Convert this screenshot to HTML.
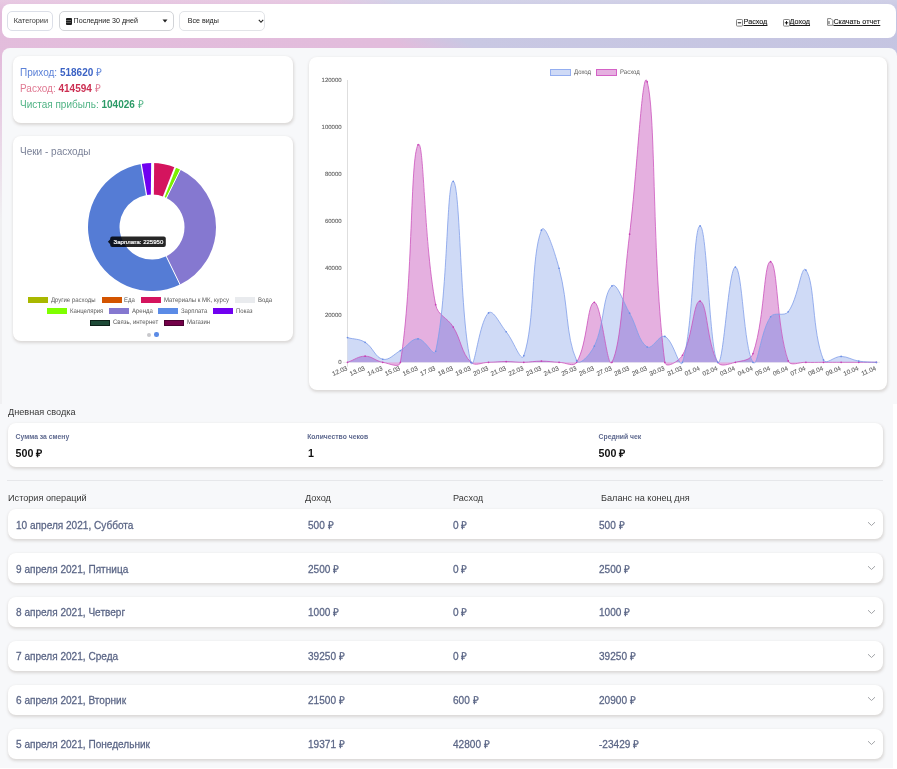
<!DOCTYPE html>
<html><head><meta charset="utf-8">
<style>
*{margin:0;padding:0;box-sizing:border-box}
html,body{width:897px;height:769px;overflow:hidden;background:#fff;font-family:"Liberation Sans",sans-serif}
.abs{position:absolute;left:0;top:0}
div{position:absolute}
#bgtop{left:0;top:0;width:897px;height:404px;background:linear-gradient(30deg,#e4bedc 0%,#e2bcdc 64%,#c9c8e3 68.5%,#c4c4e1 100%)}
#bgfade{left:0;top:0;width:897px;height:404px;background:linear-gradient(180deg,rgba(255,255,255,0.2) 0px,rgba(255,255,255,0) 14px),linear-gradient(180deg,rgba(240,240,242,0) 0px,rgba(240,240,242,0) 60px,rgba(240,240,242,1) 220px)}
#header{left:2px;top:3.5px;width:894px;height:34.5px;background:#fff;border-radius:8px}
.btn{background:#fff;border:0.6px solid #dcdfe8;border-radius:5px;height:19.5px;top:11px;font-size:7px;color:#333;line-height:18.5px}
#upper{left:2px;top:48px;width:895px;height:356px;background:#f7f8fa;border-radius:8px 8px 0 0}
#lower{left:0;top:404px;width:893px;height:364px;background:#f7f8fa}
.card{background:#fff;border-radius:8px;box-shadow:0.6px 1.5px 3px rgba(80,60,40,0.17)}
.lgb{width:20px;height:6px}
.lgt{text-rendering:geometricPrecision;font-size:6.6px;transform:scaleX(0.91);transform-origin:0 0;color:#595959;line-height:8px;white-space:nowrap}
.tk{text-rendering:geometricPrecision;font-size:6px;fill:#626262;stroke:#626262;stroke-width:0.1px;font-family:"Liberation Sans",sans-serif}
.xl{font-size:6.3px}
.yl{font-size:6px}
.link{font-size:7.2px;color:#1a1a1a;-webkit-text-stroke:0.12px #1a1a1a;text-decoration:underline;text-underline-offset:0.6px;top:17.2px;line-height:9px;white-space:nowrap}
.rt{font-size:11px;transform:scaleX(0.915);transform-origin:0 0;color:#5b6686;-webkit-text-stroke:0.28px #5b6686;line-height:12px;white-space:nowrap}
.row{left:8px;width:875px;height:30px}
.hd{font-size:9.9px;transform:scaleX(0.925);transform-origin:0 0;color:#363636;line-height:11px;white-space:nowrap}
.sl{font-size:6.8px;color:#5e698f;font-weight:bold;white-space:nowrap;line-height:8px}
.sv{font-size:10.7px;color:#111;font-weight:bold;white-space:nowrap;line-height:12px}
</style></head><body>
<div id="root" style="left:0;top:0;width:897px;height:769px;will-change:transform">
<div id="bgtop"></div>
<div id="bgfade"></div>
<div id="header">
</div>
<div class="btn" style="left:6.6px;width:46.7px;padding-left:6.2px;padding-top:0.4px;font-size:7.3px;color:#3a3a3a">Категории</div>
<div class="btn" style="left:59px;width:115.3px;border-color:#d2d4d8"></div>
<div style="left:65.9px;top:18px;width:5.7px;height:6.5px;background:#1e1e1e;border-radius:0.9px"></div><div style="left:66.4px;top:19.8px;width:4.7px;height:0.5px;background:#666"></div><div style="left:66.4px;top:21.9px;width:4.7px;height:0.4px;background:#555"></div>
<div style="left:73.6px;top:17px;font-size:7.1px;color:#222;line-height:9px;white-space:nowrap">Последние 30 дней</div>
<svg class="abs" style="left:162px;top:19px" width="6" height="4"><path d="M0.5 0.5 L5.5 0.5 L3 3.5Z" fill="#222"/></svg>
<div class="btn" style="left:179px;width:86.2px;border-color:#e2e4e8"></div>
<div style="left:187.7px;top:16.8px;font-size:7.1px;color:#222;line-height:9px;white-space:nowrap">Все виды</div>
<svg class="abs" style="left:257.5px;top:18.5px" width="6" height="5"><path d="M0.8 0.9 L3 3.3 L5.2 0.9" fill="none" stroke="#222" stroke-width="1.1"/></svg>

<div class="link" style="left:743.6px">Расход</div>
<svg class="abs" style="left:736.4px;top:18.6px" width="7" height="8" viewBox="0 0 7 8"><rect x="0.5" y="0.5" width="6" height="6.6" rx="0.8" fill="#fff" stroke="#777" stroke-width="0.9"/><path d="M1.8 3.8 H5.2" stroke="#111" stroke-width="1"/></svg>
<div class="link" style="left:789.6px">Доход</div>
<svg class="abs" style="left:783px;top:18.6px" width="7" height="8" viewBox="0 0 7 8"><rect x="0.5" y="0.5" width="6" height="6.6" rx="0.8" fill="#fff" stroke="#777" stroke-width="0.9"/><path d="M1.8 3.8 H5.2 M3.5 2.1 V5.5" stroke="#111" stroke-width="1"/></svg>
<div class="link" style="left:833.4px">Скачать отчет</div>
<svg class="abs" style="left:827.2px;top:18.4px" width="7" height="8" viewBox="0 0 7 8"><path d="M0.6 0.6 H4 L5.8 2.4 V7.3 H0.6 Z" fill="#fff" stroke="#777" stroke-width="0.9"/><path d="M2 3 V6" stroke="#222" stroke-width="0.8"/></svg>

<div id="upper"></div>
<div id="lower"></div>

<div class="card" style="left:12.5px;top:56.4px;width:280.5px;height:66.6px"></div>
<div style="left:20px;top:66px;font-size:11px;transform:scaleX(0.908);transform-origin:0 0;line-height:12px;white-space:nowrap;color:#5c82d8">Приход: <b style="color:#3b62c4">518620</b> ₽</div>
<div style="left:20px;top:82.1px;font-size:11px;transform:scaleX(0.908);transform-origin:0 0;line-height:12px;white-space:nowrap;color:#e07a93">Расход: <b style="color:#cc2f52">414594</b> ₽</div>
<div style="left:20px;top:98px;font-size:11px;transform:scaleX(0.908);transform-origin:0 0;line-height:12px;white-space:nowrap;color:#4fb384">Чистая прибыль: <b style="color:#2b9a66">104026</b> ₽</div>

<div class="card" style="left:12.5px;top:135.8px;width:280.5px;height:205px"></div>
<div style="left:20px;top:146px;font-size:10px;line-height:12px;white-space:nowrap;color:#7b8298">Чеки - расходы</div>
<svg class="abs" width="897" height="769">
<path d="M152.67 163.10 A64.00 64.00 0 0 1 175.14 167.43 L163.75 196.80 A32.50 32.50 0 0 0 152.34 194.60 Z" fill="#d4145e"/>
<path d="M175.14 167.43 A64.00 64.00 0 0 1 180.36 169.72 L166.40 197.96 A32.50 32.50 0 0 0 163.75 196.80 Z" fill="#7cf000"/>
<path d="M180.36 169.72 A64.00 64.00 0 0 1 180.06 284.62 L166.25 256.31 A32.50 32.50 0 0 0 166.40 197.96 Z" fill="#8578d0"/>
<path d="M180.06 284.62 A64.00 64.00 0 1 1 141.22 164.01 L146.52 195.06 A32.50 32.50 0 1 0 166.25 256.31 Z" fill="#557cd5"/>
<path d="M141.22 164.01 A64.00 64.00 0 0 1 152.67 163.10 L152.34 194.60 A32.50 32.50 0 0 0 146.52 195.06 Z" fill="#7000f0"/>
<line x1="146.86" y1="197.04" x2="140.88" y2="162.04" stroke="#fff" stroke-width="1.20"/>
<line x1="152.32" y1="196.60" x2="152.69" y2="161.10" stroke="#fff" stroke-width="3.00"/>
<line x1="163.03" y1="198.66" x2="175.87" y2="165.57" stroke="#fff" stroke-width="1.80"/>
<line x1="165.51" y1="199.76" x2="181.24" y2="167.93" stroke="#fff" stroke-width="1.00"/>
<line x1="165.37" y1="254.51" x2="180.93" y2="286.42" stroke="#fff" stroke-width="1.00"/>
<path d="M107.9 241.7 L110.5 239 L110.5 244.4Z" fill="rgba(0,0,0,0.85)"/>
<rect x="110.2" y="236.5" width="55.6" height="10.4" rx="2" fill="rgba(0,0,0,0.85)"/>
<text x="113.6" y="243.9" font-size="6" fill="#fff" stroke="#fff" stroke-width="0.2" font-family="Liberation Sans">Зарплата: 225950</text>
</svg>
<div class="lgb" style="left:28.1px;top:297.0px;background:#a9b800;"></div>
<div class="lgt" style="left:51.0px;top:296.9px">Другие расходы</div>
<div class="lgb" style="left:101.7px;top:297.0px;background:#d35400;"></div>
<div class="lgt" style="left:124.3px;top:296.9px">Еда</div>
<div class="lgb" style="left:140.6px;top:297.0px;background:#d4145e;"></div>
<div class="lgt" style="left:164.0px;top:296.9px">Материалы к МК, курсу</div>
<div class="lgb" style="left:234.5px;top:297.0px;background:#e9ebee;"></div>
<div class="lgt" style="left:257.7px;top:296.9px">Вода</div>
<div class="lgb" style="left:47.0px;top:308.0px;background:#7fff00;"></div>
<div class="lgt" style="left:69.9px;top:307.9px">Канцелярия</div>
<div class="lgb" style="left:109.0px;top:308.0px;background:#8578d0;"></div>
<div class="lgt" style="left:132.2px;top:307.9px">Аренда</div>
<div class="lgb" style="left:158.3px;top:308.0px;background:#5b8be6;"></div>
<div class="lgt" style="left:181.4px;top:307.9px">Зарплата</div>
<div class="lgb" style="left:213.0px;top:308.0px;background:#7000f0;"></div>
<div class="lgt" style="left:236.2px;top:307.9px">Показ</div>
<div class="lgb" style="left:89.9px;top:319.5px;background:#1d4a37;border:0.5px solid #0c2018;"></div>
<div class="lgt" style="left:113.0px;top:319.4px">Связь, интернет</div>
<div class="lgb" style="left:164.0px;top:319.5px;background:#730048;border:0.5px solid #4a0030;"></div>
<div class="lgt" style="left:187.0px;top:319.4px">Магазин</div>
<div style="left:146.6px;top:332.6px;width:4px;height:4px;border-radius:50%;background:#c8c8cc"></div>
<div style="left:154.3px;top:332px;width:4.5px;height:4.5px;border-radius:50%;background:#5b8be6"></div>

<div class="card" style="left:309px;top:56.5px;width:577.7px;height:333px"></div>
<div style="left:550.4px;top:68.7px;width:20.6px;height:7px;background:#cfdaf6;border:0.6px solid #94aef0"></div>
<div class="lgt" style="left:573.7px;top:69px">Доход</div>
<div style="left:595.9px;top:68.7px;width:21px;height:7px;background:#e5b0e0;border:0.6px solid #d462c6"></div>
<div class="lgt" style="left:619.9px;top:69px">Расход</div>
<svg class="abs" width="897" height="769" viewBox="0 0 897 769">
<line x1="347.5" y1="80" x2="347.5" y2="366.8" stroke="#d5d5d5" stroke-width="0.8"/>
<line x1="343" y1="362.3" x2="880" y2="362.3" stroke="#e0e0e0" stroke-width="0.6"/>
<defs><clipPath id="cpe"><path d="M347.50 362.30 C354.55 359.86 358.08 356.19 365.13 356.19 C372.18 356.19 375.51 361.04 382.76 362.30 C389.61 363.49 399.34 368.80 400.39 362.30 C413.44 281.82 409.90 158.11 418.02 144.85 C424.01 135.07 423.67 242.78 435.65 304.70 C437.77 315.66 447.37 317.38 453.28 327.04 C461.47 340.42 461.16 352.55 470.91 362.30 C475.27 366.66 481.49 362.44 488.54 362.30 C495.59 362.16 499.12 361.59 506.17 361.59 C513.22 361.59 516.75 362.39 523.80 362.30 C530.86 362.21 534.38 361.12 541.43 361.12 C548.48 361.12 552.00 362.06 559.06 362.30 C566.10 362.53 573.59 367.58 576.69 362.30 C587.69 343.60 587.27 302.35 594.32 302.35 C601.37 302.35 607.36 371.18 611.95 362.30 C621.46 343.91 623.13 285.50 629.58 234.18 C637.23 173.32 642.23 63.75 647.21 81.85 C656.33 115.00 651.63 259.86 664.84 362.30 C665.73 369.22 678.94 361.37 682.47 355.25 C693.04 336.92 693.44 299.85 700.10 301.18 C707.55 302.67 706.69 343.16 717.73 362.30 C720.79 367.61 728.69 363.94 735.36 362.30 C742.80 360.47 750.54 360.59 752.99 353.60 C764.65 320.34 763.83 260.28 770.62 261.68 C777.93 263.20 776.25 326.65 788.25 360.89 C790.36 366.90 798.82 362.02 805.88 362.30 C812.92 362.58 816.46 362.30 823.51 362.30 C830.56 362.30 834.09 362.30 841.14 362.30 C848.19 362.30 851.72 362.30 858.77 362.30 C865.82 362.30 869.35 362.30 876.40 362.30 L876.40 362.30 L347.50 362.30 Z"/></clipPath></defs>
<path d="M347.50 362.30 C354.55 359.86 358.08 356.19 365.13 356.19 C372.18 356.19 375.51 361.04 382.76 362.30 C389.61 363.49 399.34 368.80 400.39 362.30 C413.44 281.82 409.90 158.11 418.02 144.85 C424.01 135.07 423.67 242.78 435.65 304.70 C437.77 315.66 447.37 317.38 453.28 327.04 C461.47 340.42 461.16 352.55 470.91 362.30 C475.27 366.66 481.49 362.44 488.54 362.30 C495.59 362.16 499.12 361.59 506.17 361.59 C513.22 361.59 516.75 362.39 523.80 362.30 C530.86 362.21 534.38 361.12 541.43 361.12 C548.48 361.12 552.00 362.06 559.06 362.30 C566.10 362.53 573.59 367.58 576.69 362.30 C587.69 343.60 587.27 302.35 594.32 302.35 C601.37 302.35 607.36 371.18 611.95 362.30 C621.46 343.91 623.13 285.50 629.58 234.18 C637.23 173.32 642.23 63.75 647.21 81.85 C656.33 115.00 651.63 259.86 664.84 362.30 C665.73 369.22 678.94 361.37 682.47 355.25 C693.04 336.92 693.44 299.85 700.10 301.18 C707.55 302.67 706.69 343.16 717.73 362.30 C720.79 367.61 728.69 363.94 735.36 362.30 C742.80 360.47 750.54 360.59 752.99 353.60 C764.65 320.34 763.83 260.28 770.62 261.68 C777.93 263.20 776.25 326.65 788.25 360.89 C790.36 366.90 798.82 362.02 805.88 362.30 C812.92 362.58 816.46 362.30 823.51 362.30 C830.56 362.30 834.09 362.30 841.14 362.30 C848.19 362.30 851.72 362.30 858.77 362.30 C865.82 362.30 869.35 362.30 876.40 362.30 L876.40 362.30 L347.50 362.30 Z" fill="#e5b0e0"/>
<path d="M347.50 337.62 C354.55 339.50 359.10 338.62 365.13 342.32 C373.21 347.27 374.94 357.42 382.76 359.24 C389.05 360.71 393.60 354.48 400.39 350.55 C407.71 346.30 411.03 338.65 418.02 338.79 C425.14 338.93 434.07 358.32 435.65 351.25 C448.17 295.32 446.45 179.14 453.28 181.29 C460.55 183.56 459.96 321.42 470.91 362.30 C474.07 374.08 479.09 321.13 488.54 312.93 C493.19 308.90 499.62 323.80 506.17 331.74 C513.73 340.91 521.12 363.44 523.80 355.72 C535.22 322.82 530.83 256.46 541.43 230.18 C544.94 221.48 554.71 252.17 559.06 268.27 C568.81 304.35 565.35 335.62 576.69 360.65 C579.45 366.74 590.55 354.07 594.32 346.08 C604.65 324.17 602.66 294.57 611.95 285.90 C616.76 281.41 623.10 301.93 629.58 313.17 C637.20 326.38 638.04 340.97 647.21 347.02 C652.15 350.28 659.25 334.02 664.84 336.44 C673.35 340.13 679.85 370.50 682.47 362.30 C693.96 326.30 693.05 225.95 700.10 225.95 C707.15 225.95 709.45 352.64 717.73 362.30 C723.56 369.10 728.31 267.09 735.36 267.09 C742.41 267.09 743.61 349.09 752.99 362.30 C757.72 368.96 760.36 331.46 770.62 316.76 C774.47 311.24 784.19 317.14 788.25 311.76 C798.29 298.45 801.21 263.65 805.88 270.03 C815.32 282.93 811.72 331.06 823.51 359.95 C825.82 365.62 834.14 356.19 841.14 356.42 C848.24 356.66 851.60 359.93 858.77 361.12 C865.71 362.28 869.35 361.83 876.40 362.30 L876.40 362.30 L347.50 362.30 Z" fill="#cfdaf6"/>
<path d="M347.50 337.62 C354.55 339.50 359.10 338.62 365.13 342.32 C373.21 347.27 374.94 357.42 382.76 359.24 C389.05 360.71 393.60 354.48 400.39 350.55 C407.71 346.30 411.03 338.65 418.02 338.79 C425.14 338.93 434.07 358.32 435.65 351.25 C448.17 295.32 446.45 179.14 453.28 181.29 C460.55 183.56 459.96 321.42 470.91 362.30 C474.07 374.08 479.09 321.13 488.54 312.93 C493.19 308.90 499.62 323.80 506.17 331.74 C513.73 340.91 521.12 363.44 523.80 355.72 C535.22 322.82 530.83 256.46 541.43 230.18 C544.94 221.48 554.71 252.17 559.06 268.27 C568.81 304.35 565.35 335.62 576.69 360.65 C579.45 366.74 590.55 354.07 594.32 346.08 C604.65 324.17 602.66 294.57 611.95 285.90 C616.76 281.41 623.10 301.93 629.58 313.17 C637.20 326.38 638.04 340.97 647.21 347.02 C652.15 350.28 659.25 334.02 664.84 336.44 C673.35 340.13 679.85 370.50 682.47 362.30 C693.96 326.30 693.05 225.95 700.10 225.95 C707.15 225.95 709.45 352.64 717.73 362.30 C723.56 369.10 728.31 267.09 735.36 267.09 C742.41 267.09 743.61 349.09 752.99 362.30 C757.72 368.96 760.36 331.46 770.62 316.76 C774.47 311.24 784.19 317.14 788.25 311.76 C798.29 298.45 801.21 263.65 805.88 270.03 C815.32 282.93 811.72 331.06 823.51 359.95 C825.82 365.62 834.14 356.19 841.14 356.42 C848.24 356.66 851.60 359.93 858.77 361.12 C865.71 362.28 869.35 361.83 876.40 362.30 L876.40 362.30 L347.50 362.30 Z" fill="#b2a0e2" clip-path="url(#cpe)"/>
<path d="M347.50 362.30 C354.55 359.86 358.08 356.19 365.13 356.19 C372.18 356.19 375.51 361.04 382.76 362.30 C389.61 363.49 399.34 368.80 400.39 362.30 C413.44 281.82 409.90 158.11 418.02 144.85 C424.01 135.07 423.67 242.78 435.65 304.70 C437.77 315.66 447.37 317.38 453.28 327.04 C461.47 340.42 461.16 352.55 470.91 362.30 C475.27 366.66 481.49 362.44 488.54 362.30 C495.59 362.16 499.12 361.59 506.17 361.59 C513.22 361.59 516.75 362.39 523.80 362.30 C530.86 362.21 534.38 361.12 541.43 361.12 C548.48 361.12 552.00 362.06 559.06 362.30 C566.10 362.53 573.59 367.58 576.69 362.30 C587.69 343.60 587.27 302.35 594.32 302.35 C601.37 302.35 607.36 371.18 611.95 362.30 C621.46 343.91 623.13 285.50 629.58 234.18 C637.23 173.32 642.23 63.75 647.21 81.85 C656.33 115.00 651.63 259.86 664.84 362.30 C665.73 369.22 678.94 361.37 682.47 355.25 C693.04 336.92 693.44 299.85 700.10 301.18 C707.55 302.67 706.69 343.16 717.73 362.30 C720.79 367.61 728.69 363.94 735.36 362.30 C742.80 360.47 750.54 360.59 752.99 353.60 C764.65 320.34 763.83 260.28 770.62 261.68 C777.93 263.20 776.25 326.65 788.25 360.89 C790.36 366.90 798.82 362.02 805.88 362.30 C812.92 362.58 816.46 362.30 823.51 362.30 C830.56 362.30 834.09 362.30 841.14 362.30 C848.19 362.30 851.72 362.30 858.77 362.30 C865.82 362.30 869.35 362.30 876.40 362.30" fill="none" stroke="#c94cba" stroke-width="0.75"/>
<circle cx="347.50" cy="362.30" r="0.85" fill="#c63fb4"/>
<circle cx="365.13" cy="356.19" r="0.85" fill="#c63fb4"/>
<circle cx="382.76" cy="362.30" r="0.85" fill="#c63fb4"/>
<circle cx="400.39" cy="362.30" r="0.85" fill="#c63fb4"/>
<circle cx="418.02" cy="144.85" r="0.85" fill="#c63fb4"/>
<circle cx="435.65" cy="304.70" r="0.85" fill="#c63fb4"/>
<circle cx="453.28" cy="327.04" r="0.85" fill="#c63fb4"/>
<circle cx="470.91" cy="362.30" r="0.85" fill="#c63fb4"/>
<circle cx="488.54" cy="362.30" r="0.85" fill="#c63fb4"/>
<circle cx="506.17" cy="361.59" r="0.85" fill="#c63fb4"/>
<circle cx="523.80" cy="362.30" r="0.85" fill="#c63fb4"/>
<circle cx="541.43" cy="361.12" r="0.85" fill="#c63fb4"/>
<circle cx="559.06" cy="362.30" r="0.85" fill="#c63fb4"/>
<circle cx="576.69" cy="362.30" r="0.85" fill="#c63fb4"/>
<circle cx="594.32" cy="302.35" r="0.85" fill="#c63fb4"/>
<circle cx="611.95" cy="362.30" r="0.85" fill="#c63fb4"/>
<circle cx="629.58" cy="234.18" r="0.85" fill="#c63fb4"/>
<circle cx="647.21" cy="81.85" r="0.85" fill="#c63fb4"/>
<circle cx="664.84" cy="362.30" r="0.85" fill="#c63fb4"/>
<circle cx="682.47" cy="355.25" r="0.85" fill="#c63fb4"/>
<circle cx="700.10" cy="301.18" r="0.85" fill="#c63fb4"/>
<circle cx="717.73" cy="362.30" r="0.85" fill="#c63fb4"/>
<circle cx="735.36" cy="362.30" r="0.85" fill="#c63fb4"/>
<circle cx="752.99" cy="353.60" r="0.85" fill="#c63fb4"/>
<circle cx="770.62" cy="261.68" r="0.85" fill="#c63fb4"/>
<circle cx="788.25" cy="360.89" r="0.85" fill="#c63fb4"/>
<circle cx="805.88" cy="362.30" r="0.85" fill="#c63fb4"/>
<circle cx="823.51" cy="362.30" r="0.85" fill="#c63fb4"/>
<circle cx="841.14" cy="362.30" r="0.85" fill="#c63fb4"/>
<circle cx="858.77" cy="362.30" r="0.85" fill="#c63fb4"/>
<circle cx="876.40" cy="362.30" r="0.85" fill="#c63fb4"/>
<path d="M347.50 337.62 C354.55 339.50 359.10 338.62 365.13 342.32 C373.21 347.27 374.94 357.42 382.76 359.24 C389.05 360.71 393.60 354.48 400.39 350.55 C407.71 346.30 411.03 338.65 418.02 338.79 C425.14 338.93 434.07 358.32 435.65 351.25 C448.17 295.32 446.45 179.14 453.28 181.29 C460.55 183.56 459.96 321.42 470.91 362.30 C474.07 374.08 479.09 321.13 488.54 312.93 C493.19 308.90 499.62 323.80 506.17 331.74 C513.73 340.91 521.12 363.44 523.80 355.72 C535.22 322.82 530.83 256.46 541.43 230.18 C544.94 221.48 554.71 252.17 559.06 268.27 C568.81 304.35 565.35 335.62 576.69 360.65 C579.45 366.74 590.55 354.07 594.32 346.08 C604.65 324.17 602.66 294.57 611.95 285.90 C616.76 281.41 623.10 301.93 629.58 313.17 C637.20 326.38 638.04 340.97 647.21 347.02 C652.15 350.28 659.25 334.02 664.84 336.44 C673.35 340.13 679.85 370.50 682.47 362.30 C693.96 326.30 693.05 225.95 700.10 225.95 C707.15 225.95 709.45 352.64 717.73 362.30 C723.56 369.10 728.31 267.09 735.36 267.09 C742.41 267.09 743.61 349.09 752.99 362.30 C757.72 368.96 760.36 331.46 770.62 316.76 C774.47 311.24 784.19 317.14 788.25 311.76 C798.29 298.45 801.21 263.65 805.88 270.03 C815.32 282.93 811.72 331.06 823.51 359.95 C825.82 365.62 834.14 356.19 841.14 356.42 C848.24 356.66 851.60 359.93 858.77 361.12 C865.71 362.28 869.35 361.83 876.40 362.30" fill="none" stroke="#7b9ae8" stroke-width="0.75"/>
<circle cx="347.50" cy="337.62" r="0.85" fill="#6c8fe6"/>
<circle cx="365.13" cy="342.32" r="0.85" fill="#6c8fe6"/>
<circle cx="382.76" cy="359.24" r="0.85" fill="#6c8fe6"/>
<circle cx="400.39" cy="350.55" r="0.85" fill="#6c8fe6"/>
<circle cx="418.02" cy="338.79" r="0.85" fill="#6c8fe6"/>
<circle cx="435.65" cy="351.25" r="0.85" fill="#6c8fe6"/>
<circle cx="453.28" cy="181.29" r="0.85" fill="#6c8fe6"/>
<circle cx="470.91" cy="362.30" r="0.85" fill="#6c8fe6"/>
<circle cx="488.54" cy="312.93" r="0.85" fill="#6c8fe6"/>
<circle cx="506.17" cy="331.74" r="0.85" fill="#6c8fe6"/>
<circle cx="523.80" cy="355.72" r="0.85" fill="#6c8fe6"/>
<circle cx="541.43" cy="230.18" r="0.85" fill="#6c8fe6"/>
<circle cx="559.06" cy="268.27" r="0.85" fill="#6c8fe6"/>
<circle cx="576.69" cy="360.65" r="0.85" fill="#6c8fe6"/>
<circle cx="594.32" cy="346.08" r="0.85" fill="#6c8fe6"/>
<circle cx="611.95" cy="285.90" r="0.85" fill="#6c8fe6"/>
<circle cx="629.58" cy="313.17" r="0.85" fill="#6c8fe6"/>
<circle cx="647.21" cy="347.02" r="0.85" fill="#6c8fe6"/>
<circle cx="664.84" cy="336.44" r="0.85" fill="#6c8fe6"/>
<circle cx="682.47" cy="362.30" r="0.85" fill="#6c8fe6"/>
<circle cx="700.10" cy="225.95" r="0.85" fill="#6c8fe6"/>
<circle cx="717.73" cy="362.30" r="0.85" fill="#6c8fe6"/>
<circle cx="735.36" cy="267.09" r="0.85" fill="#6c8fe6"/>
<circle cx="752.99" cy="362.30" r="0.85" fill="#6c8fe6"/>
<circle cx="770.62" cy="316.76" r="0.85" fill="#6c8fe6"/>
<circle cx="788.25" cy="311.76" r="0.85" fill="#6c8fe6"/>
<circle cx="805.88" cy="270.03" r="0.85" fill="#6c8fe6"/>
<circle cx="823.51" cy="359.95" r="0.85" fill="#6c8fe6"/>
<circle cx="841.14" cy="356.42" r="0.85" fill="#6c8fe6"/>
<circle cx="858.77" cy="361.12" r="0.85" fill="#6c8fe6"/>
<circle cx="876.40" cy="362.30" r="0.85" fill="#6c8fe6"/>
<text transform="translate(341.6 82.30)" text-anchor="end" class="tk yl">120000</text>
<text transform="translate(341.6 129.32)" text-anchor="end" class="tk yl">100000</text>
<text transform="translate(341.6 176.33)" text-anchor="end" class="tk yl">80000</text>
<text transform="translate(341.6 223.35)" text-anchor="end" class="tk yl">60000</text>
<text transform="translate(341.6 270.37)" text-anchor="end" class="tk yl">40000</text>
<text transform="translate(341.6 317.38)" text-anchor="end" class="tk yl">20000</text>
<text transform="translate(341.6 364.40)" text-anchor="end" class="tk yl">0</text>
<text transform="translate(347.70 369.80) rotate(-23)" text-anchor="end" class="tk xl">12.03</text>
<text transform="translate(365.33 369.80) rotate(-23)" text-anchor="end" class="tk xl">13.03</text>
<text transform="translate(382.96 369.80) rotate(-23)" text-anchor="end" class="tk xl">14.03</text>
<text transform="translate(400.59 369.80) rotate(-23)" text-anchor="end" class="tk xl">15.03</text>
<text transform="translate(418.22 369.80) rotate(-23)" text-anchor="end" class="tk xl">16.03</text>
<text transform="translate(435.85 369.80) rotate(-23)" text-anchor="end" class="tk xl">17.03</text>
<text transform="translate(453.48 369.80) rotate(-23)" text-anchor="end" class="tk xl">18.03</text>
<text transform="translate(471.11 369.80) rotate(-23)" text-anchor="end" class="tk xl">19.03</text>
<text transform="translate(488.74 369.80) rotate(-23)" text-anchor="end" class="tk xl">20.03</text>
<text transform="translate(506.37 369.80) rotate(-23)" text-anchor="end" class="tk xl">21.03</text>
<text transform="translate(524.00 369.80) rotate(-23)" text-anchor="end" class="tk xl">22.03</text>
<text transform="translate(541.63 369.80) rotate(-23)" text-anchor="end" class="tk xl">23.03</text>
<text transform="translate(559.26 369.80) rotate(-23)" text-anchor="end" class="tk xl">24.03</text>
<text transform="translate(576.89 369.80) rotate(-23)" text-anchor="end" class="tk xl">25.03</text>
<text transform="translate(594.52 369.80) rotate(-23)" text-anchor="end" class="tk xl">26.03</text>
<text transform="translate(612.15 369.80) rotate(-23)" text-anchor="end" class="tk xl">27.03</text>
<text transform="translate(629.78 369.80) rotate(-23)" text-anchor="end" class="tk xl">28.03</text>
<text transform="translate(647.41 369.80) rotate(-23)" text-anchor="end" class="tk xl">29.03</text>
<text transform="translate(665.04 369.80) rotate(-23)" text-anchor="end" class="tk xl">30.03</text>
<text transform="translate(682.67 369.80) rotate(-23)" text-anchor="end" class="tk xl">31.03</text>
<text transform="translate(700.30 369.80) rotate(-23)" text-anchor="end" class="tk xl">01.04</text>
<text transform="translate(717.93 369.80) rotate(-23)" text-anchor="end" class="tk xl">02.04</text>
<text transform="translate(735.56 369.80) rotate(-23)" text-anchor="end" class="tk xl">03.04</text>
<text transform="translate(753.19 369.80) rotate(-23)" text-anchor="end" class="tk xl">04.04</text>
<text transform="translate(770.82 369.80) rotate(-23)" text-anchor="end" class="tk xl">05.04</text>
<text transform="translate(788.45 369.80) rotate(-23)" text-anchor="end" class="tk xl">06.04</text>
<text transform="translate(806.08 369.80) rotate(-23)" text-anchor="end" class="tk xl">07.04</text>
<text transform="translate(823.71 369.80) rotate(-23)" text-anchor="end" class="tk xl">08.04</text>
<text transform="translate(841.34 369.80) rotate(-23)" text-anchor="end" class="tk xl">09.04</text>
<text transform="translate(858.97 369.80) rotate(-23)" text-anchor="end" class="tk xl">10.04</text>
<text transform="translate(876.60 369.80) rotate(-23)" text-anchor="end" class="tk xl">11.04</text>
</svg>

<div class="hd" style="left:7.8px;top:405.8px">Дневная сводка</div>
<div class="card" style="left:8px;top:423px;width:875px;height:44px"></div>
<div class="sl" style="left:15.6px;top:433px">Сумма за смену</div>
<div class="sv" style="left:15.6px;top:447.2px">500 ₽</div>
<div class="sl" style="left:307.2px;top:433px">Количество чеков</div>
<div class="sv" style="left:308px;top:447.2px">1</div>
<div class="sl" style="left:598.6px;top:433px">Средний чек</div>
<div class="sv" style="left:598.6px;top:447.2px">500 ₽</div>
<div style="left:7px;top:480px;width:876px;height:0.6px;background:#e6e7ea"></div>

<div class="hd" style="left:7.8px;top:492.2px">История операций</div>
<div class="hd" style="left:304.8px;top:492.2px">Доход</div>
<div class="hd" style="left:453.1px;top:492.2px">Расход</div>
<div class="hd" style="left:601.4px;top:492.2px">Баланс на конец дня</div>
<div class="card row" style="top:509.0px"></div>
<div class="rt" style="left:16.0px;top:518.6px">10 апреля 2021, Суббота</div>
<div class="rt" style="left:307.5px;top:518.6px">500 ₽</div>
<div class="rt" style="left:453.1px;top:518.6px">0 ₽</div>
<div class="rt" style="left:598.6px;top:518.6px">500 ₽</div>
<svg class="abs" style="left:867px;top:520.8px" width="9" height="6" viewBox="0 0 9 6"><path d="M1 1.2 L4.5 4.5 L8 1.2" fill="none" stroke="#a2a4a8" stroke-width="1"/></svg>
<div class="card row" style="top:552.9px"></div>
<div class="rt" style="left:16.0px;top:562.5px">9 апреля 2021, Пятница</div>
<div class="rt" style="left:307.5px;top:562.5px">2500 ₽</div>
<div class="rt" style="left:453.1px;top:562.5px">0 ₽</div>
<div class="rt" style="left:598.6px;top:562.5px">2500 ₽</div>
<svg class="abs" style="left:867px;top:564.7px" width="9" height="6" viewBox="0 0 9 6"><path d="M1 1.2 L4.5 4.5 L8 1.2" fill="none" stroke="#a2a4a8" stroke-width="1"/></svg>
<div class="card row" style="top:596.8px"></div>
<div class="rt" style="left:16.0px;top:606.4px">8 апреля 2021, Четверг</div>
<div class="rt" style="left:307.5px;top:606.4px">1000 ₽</div>
<div class="rt" style="left:453.1px;top:606.4px">0 ₽</div>
<div class="rt" style="left:598.6px;top:606.4px">1000 ₽</div>
<svg class="abs" style="left:867px;top:608.6px" width="9" height="6" viewBox="0 0 9 6"><path d="M1 1.2 L4.5 4.5 L8 1.2" fill="none" stroke="#a2a4a8" stroke-width="1"/></svg>
<div class="card row" style="top:640.7px"></div>
<div class="rt" style="left:16.0px;top:650.3px">7 апреля 2021, Среда</div>
<div class="rt" style="left:307.5px;top:650.3px">39250 ₽</div>
<div class="rt" style="left:453.1px;top:650.3px">0 ₽</div>
<div class="rt" style="left:598.6px;top:650.3px">39250 ₽</div>
<svg class="abs" style="left:867px;top:652.5px" width="9" height="6" viewBox="0 0 9 6"><path d="M1 1.2 L4.5 4.5 L8 1.2" fill="none" stroke="#a2a4a8" stroke-width="1"/></svg>
<div class="card row" style="top:684.6px"></div>
<div class="rt" style="left:16.0px;top:694.2px">6 апреля 2021, Вторник</div>
<div class="rt" style="left:307.5px;top:694.2px">21500 ₽</div>
<div class="rt" style="left:453.1px;top:694.2px">600 ₽</div>
<div class="rt" style="left:598.6px;top:694.2px">20900 ₽</div>
<svg class="abs" style="left:867px;top:696.4px" width="9" height="6" viewBox="0 0 9 6"><path d="M1 1.2 L4.5 4.5 L8 1.2" fill="none" stroke="#a2a4a8" stroke-width="1"/></svg>
<div class="card row" style="top:728.5px"></div>
<div class="rt" style="left:16.0px;top:738.1px">5 апреля 2021, Понедельник</div>
<div class="rt" style="left:307.5px;top:738.1px">19371 ₽</div>
<div class="rt" style="left:453.1px;top:738.1px">42800 ₽</div>
<div class="rt" style="left:598.6px;top:738.1px">-23429 ₽</div>
<svg class="abs" style="left:867px;top:740.3px" width="9" height="6" viewBox="0 0 9 6"><path d="M1 1.2 L4.5 4.5 L8 1.2" fill="none" stroke="#a2a4a8" stroke-width="1"/></svg>
</div>
</body></html>
